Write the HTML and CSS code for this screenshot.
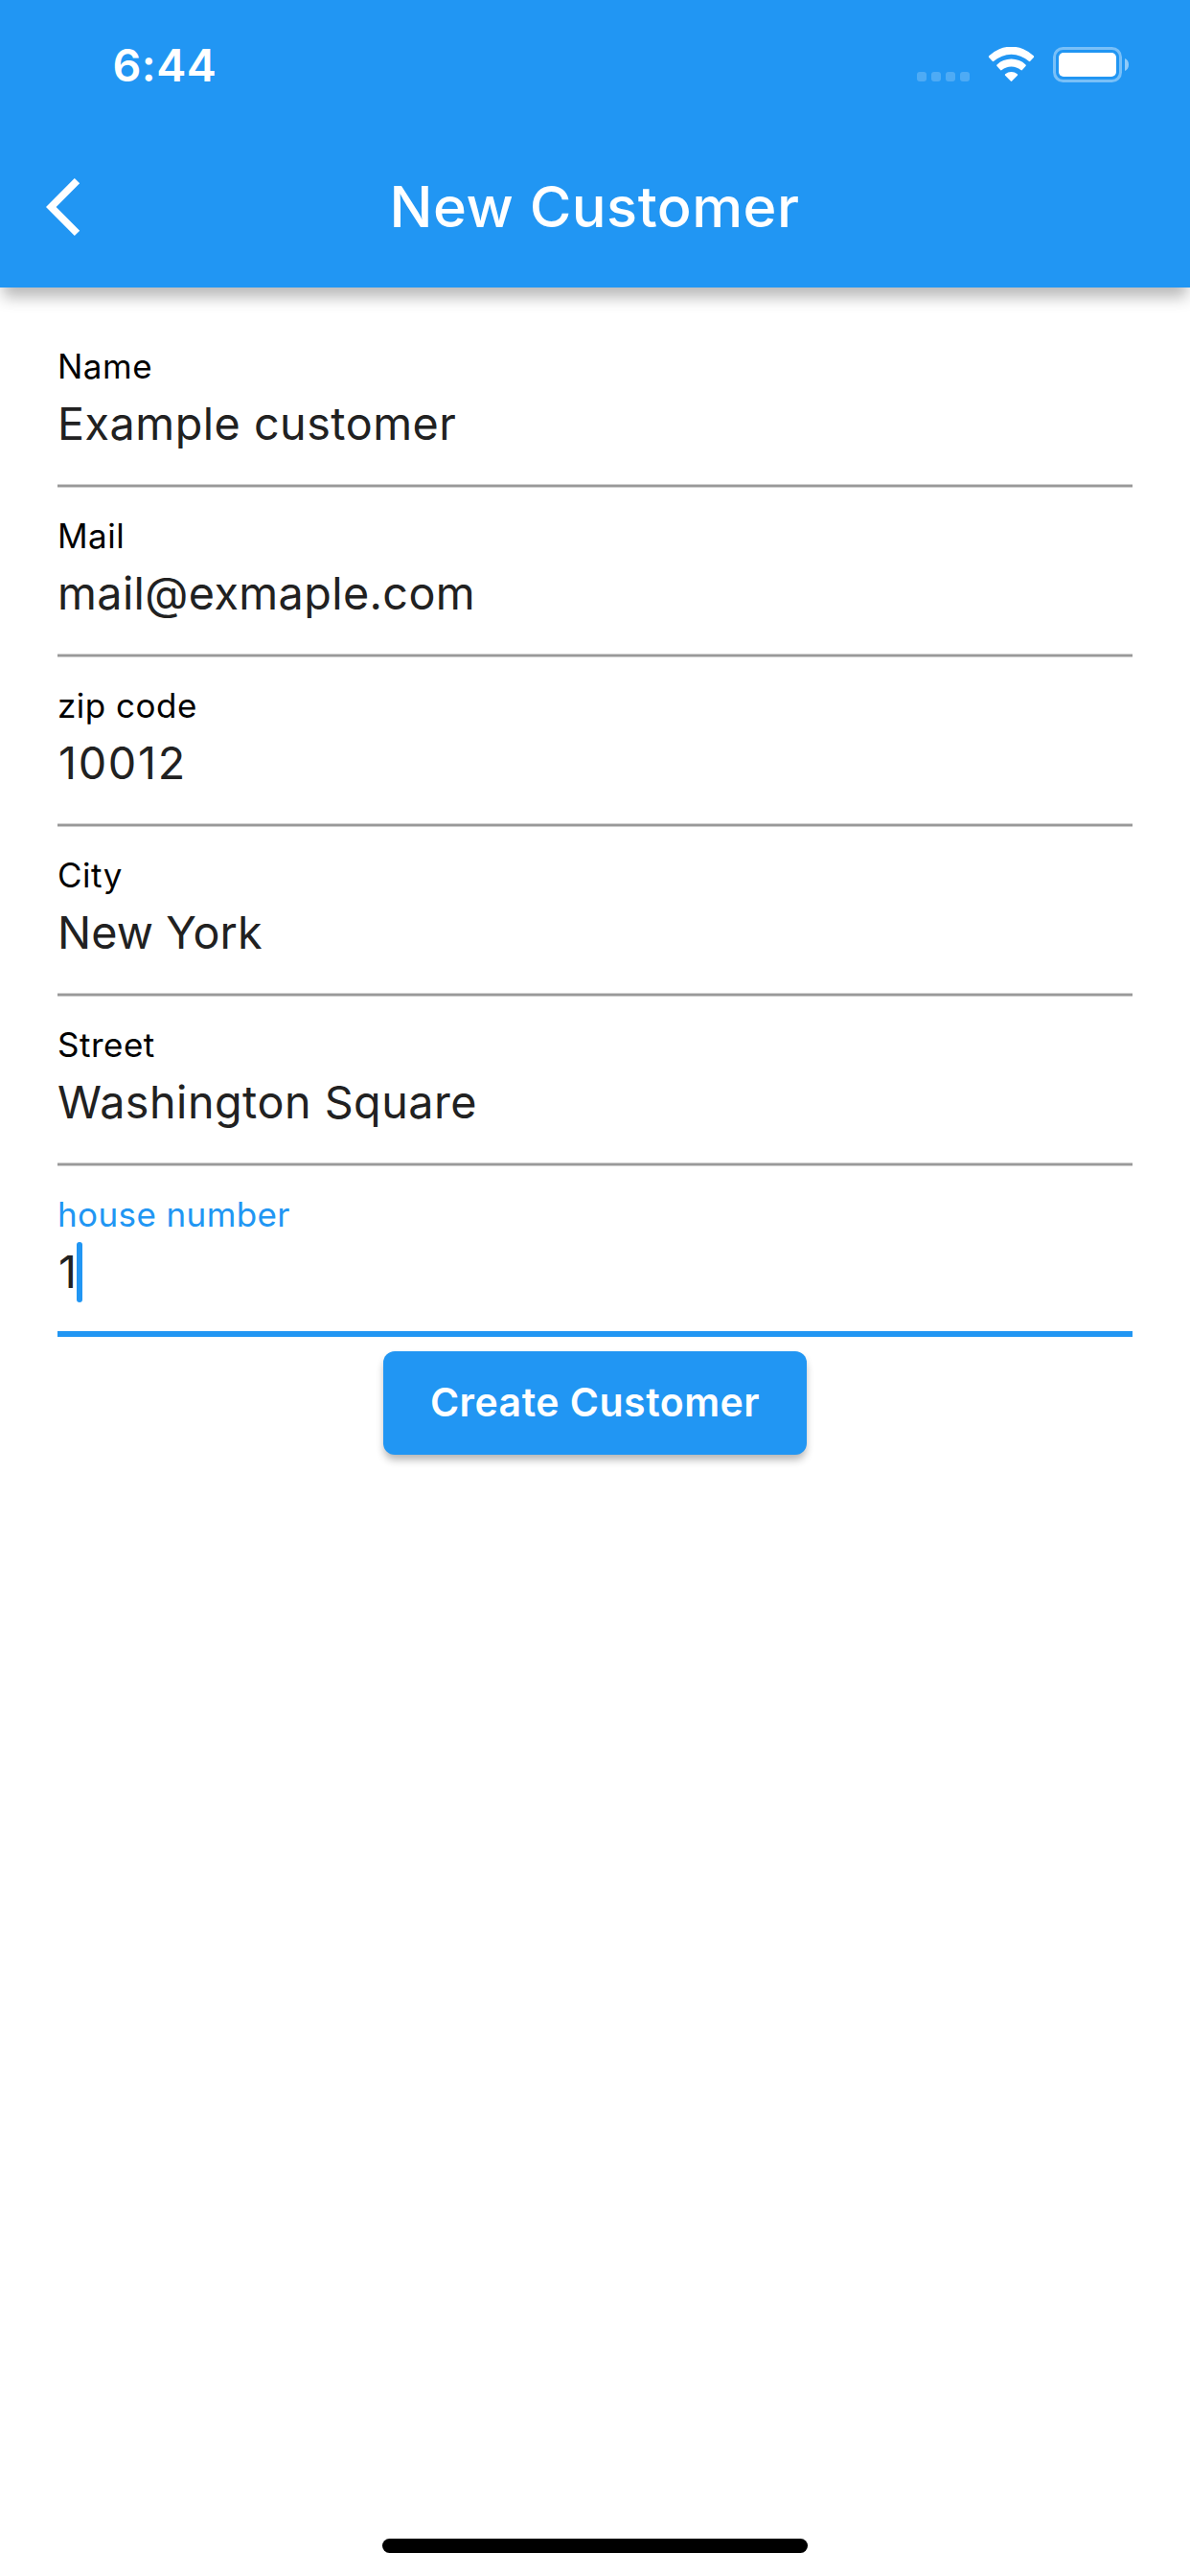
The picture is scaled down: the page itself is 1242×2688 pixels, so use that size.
FILE: index.html
```html
<!DOCTYPE html>
<html lang="en">
<head>
<meta charset="utf-8">
<title>New Customer</title>
<link rel="stylesheet" href="styles.css">
</head>
<body>
<div class="screen">
  <header class="header">
    <div class="status-bar">
      <span class="time">6:44</span>
      <svg class="status-icons" width="222" height="37" viewBox="0 0 222 37" fill="#fff">
        <g opacity=".2">
          <rect x="0" y="26" width="10" height="10" rx="3"/>
          <rect x="15" y="26" width="10" height="10" rx="3"/>
          <rect x="30" y="26" width="10" height="10" rx="3"/>
          <rect x="45" y="26" width="10" height="10" rx="3"/>
        </g>
        <path d="M75.2 9.3A33 33 0 0 1 121.8 9.3Q122.6 10.100 121.800 10.900L118.300 14.800Q117.500 15.500 116.700 14.800A27.300 27.300 0 0 0 80.300 14.800Q79.500 15.500 78.700 14.800L75.200 10.900Q74.400 10.100 75.200 9.300Z"/>
        <path d="M83.500 18.500A22 22 0 0 1 113.500 18.500Q114.300 19.300 113.500 20.100L109.900 24.100Q109.200 24.800 108.400 24.100A15.500 15.500 0 0 0 88.600 24.100Q87.800 24.800 87.100 24.100L83.500 20.100Q82.700 19.300 83.500 18.500Z"/>
        <path d="M92.200 28.200A10 10 0 0 1 104.800 28.200Q105.700 28.900 104.900 29.700L99.200 35.600Q98.500 36.200 97.800 35.600L92.100 29.700Q91.300 28.900 92.200 28.200Z"/>
        <rect x="143.500" y="1.500" width="69" height="34" rx="9" fill="none" stroke="#fff" stroke-width="3" opacity=".4"/>
        <rect x="148" y="6" width="60" height="25" rx="5"/>
        <path d="M217 12C219.600 13 221 15.500 221 18.500S219.600 24 217 25Z" opacity=".5"/>
      </svg>
    </div>
    <div class="app-bar">
      <svg class="back" width="36" height="60" viewBox="0 0 36 60" fill="#fff"><path d="M29.800 0L35.200 5.300L10.600 30L35.200 54.700L29.800 60L0 30Z"/></svg>
      <h1 class="title">New Customer</h1>
    </div>
  </header>
  <main class="form">
    <div class="field"><div class="label">Name</div><div class="value">Example customer</div></div>
    <div class="field"><div class="label">Mail</div><div class="value mail">mail@exmaple.com</div></div>
    <div class="field"><div class="label">zip code</div><div class="value digits">10012</div></div>
    <div class="field"><div class="label">City</div><div class="value city">New York</div></div>
    <div class="field"><div class="label">Street</div><div class="value">Washington Square</div></div>
    <div class="field focused"><div class="label">house number</div><div class="value">1<span class="caret"></span></div></div>
    <button class="submit">Create Customer</button>
  </main>
  <div class="home-indicator"></div>
</div>
</body>
</html>
```
FILE: styles.css
```css
* { box-sizing: border-box; }

body {
  margin: 0;
  background: #fff;
  font-family: Inter, "Liberation Sans", sans-serif;
}

.screen {
  width: 1242px;
  height: 2688px;
  display: flex;
  flex-direction: column;
  overflow: hidden;
}

.header {
  height: 300px;
  flex: none;
  background: #2196f3;
  color: #fff;
  box-shadow: 0 13px 15px -3px rgba(0, 0, 0, .28);
}

.status-bar {
  height: 132px;
  padding: 0 63px 0 117.5px;
  display: flex;
  justify-content: space-between;
  align-items: flex-start;
}

.time {
  font-size: 46.7px;
  font-weight: 600;
  line-height: 136px;
  letter-spacing: .5px;
}

.status-icons { margin-top: 49px; }

.app-bar {
  height: 168px;
  padding-left: 48px;
  display: flex;
  align-items: center;
}

.title {
  margin: 0 0 0 322.5px;
  padding-bottom: 2px;
  font-size: 59.5px;
  font-weight: 500;
  line-height: 166px;
  letter-spacing: .5px;
  white-space: nowrap;
}

.form {
  flex: 1;
  padding: 32px 60px 0;
  display: flex;
  flex-direction: column;
}

.field {
  height: 177px;
  padding-top: 30px;
  background: linear-gradient(#cfcfcf 0 1px, #999 1px 3px, #cfcfcf 3px) 0 100% / 100% 4px no-repeat;
}

.label {
  font-size: 35px;
  line-height: 40px;
  letter-spacing: .5px;
  color: #000;
}

.value {
  display: flex;
  align-items: center;
  font-size: 46.7px;
  line-height: 80px;
  letter-spacing: .5px;
  color: #212121;
}

.mail { letter-spacing: .4px; }

.digits {
  padding-left: 1px;
  letter-spacing: 1.7px;
}

.city { letter-spacing: .1px; }

.focused {
  height: 178px;
  background: none;
  border-bottom: 6px solid #2196f3;
}

.focused .label {
  color: #2196f3;
  letter-spacing: .4px;
}

.focused .value {
  padding-left: 1px;
  letter-spacing: 0;
}

.caret {
  width: 6px;
  height: 63px;
  margin-top: 1px;
  border-radius: 3px;
  background: #2196f3;
}

.submit {
  width: 442px;
  height: 108px;
  margin-top: 15px;
  padding: 0 0 2px;
  align-self: center;
  border: 0;
  border-radius: 12px;
  background: #2196f3;
  color: #fff;
  font: 600 41px/106px Inter, "Liberation Sans", sans-serif;
  letter-spacing: .5px;
  box-shadow: 0 6px 8px -1px rgba(0, 0, 0, .3);
}

.home-indicator {
  width: 444px;
  height: 15px;
  margin: 0 auto 24px;
  flex: none;
  border-radius: 8px;
  background: #000;
}
```
